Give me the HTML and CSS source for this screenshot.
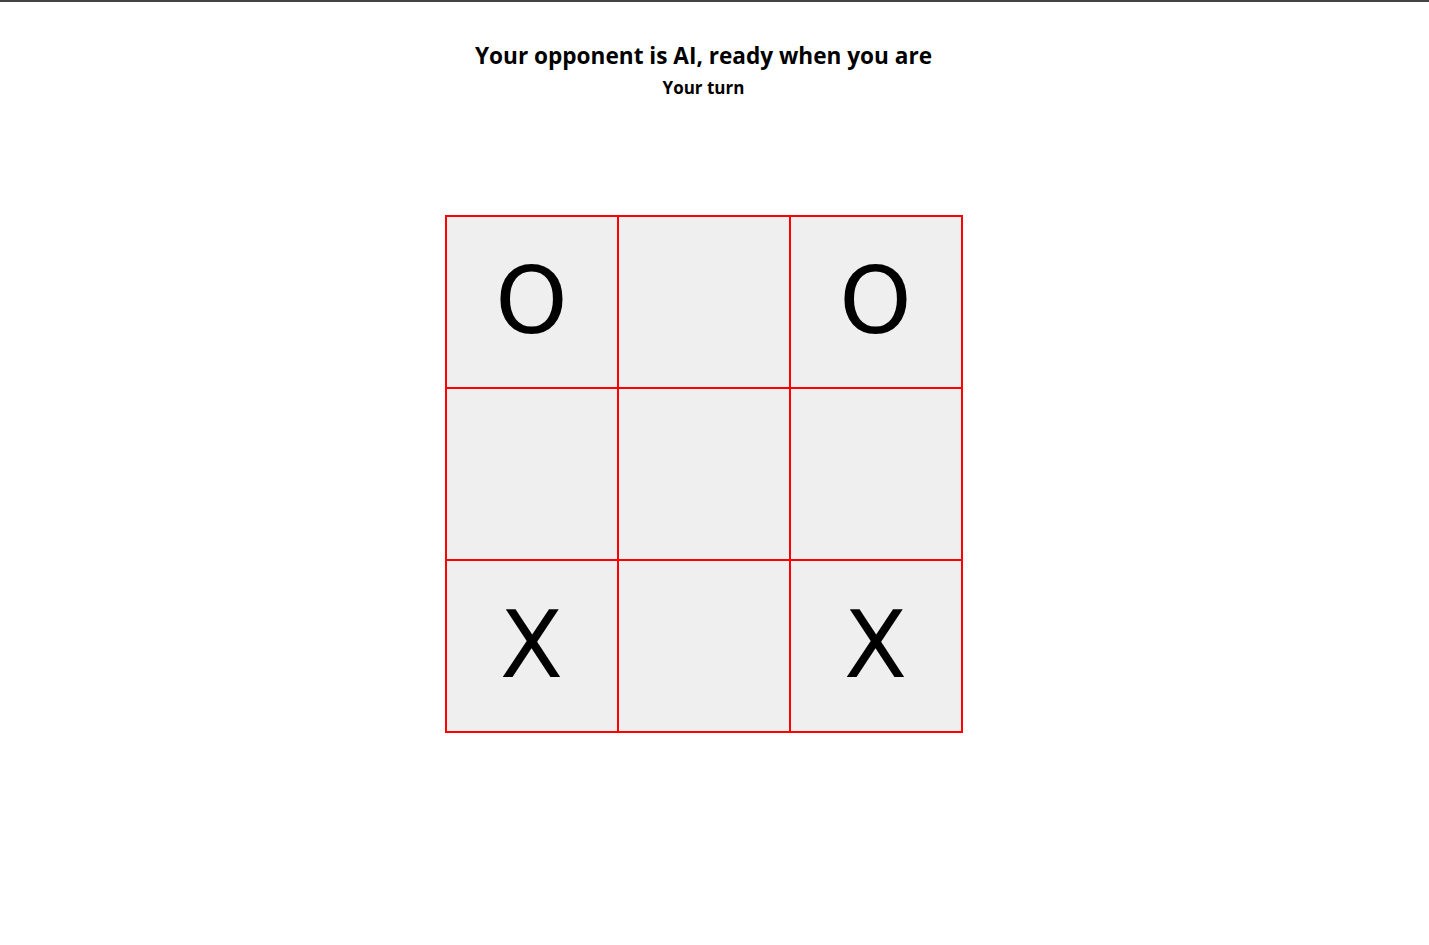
FILE: index.html
```html
<!DOCTYPE html>
<html>
<head>
<meta charset="utf-8">
<link rel="stylesheet" href="styles.css">
</head>
<body>
<div class="page">
  <header class="header">
    <h1 class="title">Your opponent is AI, ready when you are</h1>
    <p class="status">Your turn</p>
  </header>
  <div class="board">
    <div class="cell">O</div>
    <div class="cell"></div>
    <div class="cell">O</div>
    <div class="cell"></div>
    <div class="cell"></div>
    <div class="cell"></div>
    <div class="cell">X</div>
    <div class="cell"></div>
    <div class="cell">X</div>
  </div>
</div>
</body>
</html>
```

FILE: styles.css
```css
html, body {
  margin: 0;
  padding: 0;
  background: #ffffff;
}
body {
  border-top: 2px solid #444444;
  font-family: "Open Sans", "DejaVu Sans", sans-serif;
  color: #000;
}
.page {
  width: 1407px;
  display: flex;
  flex-direction: column;
  align-items: center;
}
.header {
  display: flex;
  flex-direction: column;
  align-items: center;
  padding-top: 40px;
}
.title {
  margin: 0;
  font-size: 22.6px;
  font-weight: 700;
  line-height: 28px;
}
.status {
  margin: 8px 0 0 0;
  font-size: 17px;
  font-weight: 700;
  line-height: 20px;
}
.board {
  margin-top: 117px;
  display: grid;
  grid-template-columns: repeat(3, 172px);
  grid-template-rows: repeat(3, 172px);
  border: 1px solid #ff0000;
}
.cell {
  border: 1px solid #ff0000;
  background: #efefef;
  display: flex;
  align-items: center;
  justify-content: center;
  font-family: "DejaVu Sans", sans-serif;
  font-size: 92px;
  line-height: 1;
}
```
